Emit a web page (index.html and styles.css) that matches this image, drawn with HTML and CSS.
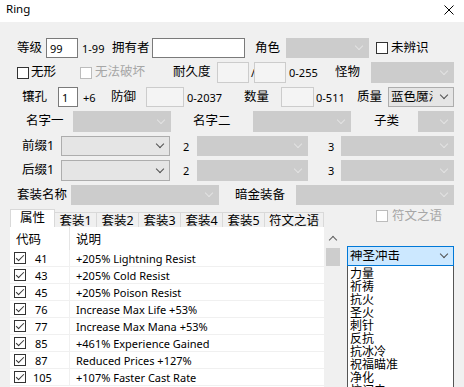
FILE: index.html
```html
<!DOCTYPE html>
<html>
<head>
    <meta charset="utf-8">
    <link rel="stylesheet" href="styles.css">
</head>
<body>
    <div class="titlebar">
        <span class="title">Ring</span>
        <svg class="close" width="10" height="10" viewBox="0 0 10 10"><path d="M0.5 0.5L9.5 9.5M9.5 0.5L0.5 9.5"/></svg>
    </div>

    <div class="form">
        <div class="row r1">
            <span class="zh">等级</span>
            <span class="box w32">99</span>
            <span>1-99</span>
            <span class="zh">拥有者</span>
            <span class="box w93"></span>
            <span class="zh">角色</span>
            <span class="cb w83"></span>
            <span class="chk"></span>
            <span class="zh">未辨识</span>
        </div>
        <div class="row r2">
            <span class="chk"></span>
            <span class="zh">无形</span>
            <span class="chk off"></span>
            <span class="zh gray">无法破坏</span>
            <span class="zh">耐久度</span>
            <span class="box dis w32"></span>
            <span>/</span>
            <span class="box dis w32"></span>
            <span>0-255</span>
            <span class="zh">怪物</span>
            <span class="cb w83"></span>
        </div>
        <div class="row r3">
            <span class="zh">镶孔</span>
            <span class="box w20">1</span>
            <span>+6</span>
            <span class="zh">防御</span>
            <span class="box dis w38"></span>
            <span>0-2037</span>
            <span class="zh">数量</span>
            <span class="box dis w33"></span>
            <span>0-511</span>
            <span class="zh">质量</span>
            <span class="cb en w66"><span class="val">蓝色魔法</span></span>
        </div>
        <div class="row r4">
            <span class="zh">名字一</span>
            <span class="cb w98"></span>
            <span class="zh">名字二</span>
            <span class="cb w98"></span>
            <span class="zh">子类</span>
            <span class="cb w36"></span>
        </div>
        <div class="row r5">
            <span class="zh">前缀1</span>
            <span class="cb en w109"></span>
            <span>2</span>
            <span class="cb w111"></span>
            <span>3</span>
            <span class="cb w113"></span>
        </div>
        <div class="row r5">
            <span class="zh">后缀1</span>
            <span class="cb en w109"></span>
            <span>2</span>
            <span class="cb w111"></span>
            <span>3</span>
            <span class="cb w113"></span>
        </div>
        <div class="row r7">
            <span class="zh">套装名称</span>
            <span class="cb w148"></span>
            <span class="zh">暗金装备</span>
            <span class="cb w158"></span>
        </div>
    </div>

    <div class="lower">
        <div class="tabctl">
            <div class="tabs">
                <span class="tab on">属性</span>
                <span class="tab">套装1</span>
                <span class="tab">套装2</span>
                <span class="tab">套装3</span>
                <span class="tab">套装4</span>
                <span class="tab">套装5</span>
                <span class="tab wide">符文之语</span>
            </div>
            <div class="page">
                <div class="list">
                    <div class="lhead">
                        <span class="h1">代码</span>
                        <span class="h2">说明</span>
                    </div>
                    <div class="lrow"><span class="c1"><span class="chk on"></span><span class="num">41</span></span><span class="desc">+205% Lightning Resist</span></div>
                    <div class="lrow"><span class="c1"><span class="chk on"></span><span class="num">43</span></span><span class="desc">+205% Cold Resist</span></div>
                    <div class="lrow"><span class="c1"><span class="chk on"></span><span class="num">45</span></span><span class="desc">+205% Poison Resist</span></div>
                    <div class="lrow"><span class="c1"><span class="chk on"></span><span class="num">76</span></span><span class="desc">Increase Max Life +53%</span></div>
                    <div class="lrow"><span class="c1"><span class="chk on"></span><span class="num">77</span></span><span class="desc">Increase Max Mana +53%</span></div>
                    <div class="lrow"><span class="c1"><span class="chk on"></span><span class="num">85</span></span><span class="desc">+461% Experience Gained</span></div>
                    <div class="lrow"><span class="c1"><span class="chk on"></span><span class="num">87</span></span><span class="desc">Reduced Prices +127%</span></div>
                    <div class="lrow"><span class="c1"><span class="chk on"></span><span class="num n3">105</span></span><span class="desc">+107% Faster Cast Rate</span></div>
                </div>
                <div class="sb">
                    <span class="up"></span>
                    <span class="thumb"></span>
                </div>
            </div>
        </div>

        <div class="side">
            <div class="rw">
                <span class="chk off"></span>
                <span class="zh gray">符文之语</span>
            </div>
            <div class="cb sel"><span class="val">神圣冲击</span></div>
            <div class="drop">
                <div>力量</div>
                <div>祈祷</div>
                <div>抗火</div>
                <div>圣火</div>
                <div>刺针</div>
                <div>反抗</div>
                <div>抗冰冷</div>
                <div>祝福瞄准</div>
                <div>净化</div>
                <div>抗闪电</div>
            </div>
        </div>
    </div>
</body>
</html>
```

FILE: styles.css
```css
/* window */

body {
    margin: 0;
    width: 464px;
    height: 387px;
    overflow: hidden;
    background: #f0f0f0;
    font-family: "Noto Sans", "Noto Sans CJK SC", sans-serif;
    font-size: 11px;
    color: #000;
}

.titlebar {
    height: 22px;
    box-sizing: border-box;
    padding: 0 10px 0 6px;
    background: #fff;
    display: flex;
    justify-content: space-between;
    align-items: flex-start;
}

.title {
    font-size: 11.5px;
    line-height: 18px;
}

.close {
    margin-top: 5px;
    fill: none;
    stroke: #000;
    stroke-width: 1;
}

/* form rows */

.form {
    display: grid;
    grid-template-rows: 20px 21px 20px 21px 20px 21px 20px;
    row-gap: 4px;
    padding-top: 16px;
}

.row {
    display: grid;
    align-items: center;
    white-space: nowrap;
    line-height: 1;
}

.r1 {
    padding-left: 17px;
    grid-template-columns: 29px 36px 30px 40px 103px 31px 90px 15px auto;
}

.r2 {
    padding-left: 17px;
    grid-template-columns: 14px 49px 15px 78px 44px 34px 3px 35px 46px 36px auto;
}

.r3 {
    padding-left: 22px;
    grid-template-columns: 36px 25px 28px 35px 41px 57px 37px 35px 41px 31px auto;
}

.r4 {
    padding-left: 26px;
    grid-template-columns: 47px 120px 60px 121px 44px auto;
}

.r5 {
    padding-left: 22px;
    grid-template-columns: 39px 122px 14px 131px 13px auto;
}

.r7 {
    padding-left: 17px;
    grid-template-columns: 54px 164px 61px auto;
}

.zh {
    font-size: 12.5px;
}

.gray {
    color: #a6a6a6;
}

/* widths */
.w20 { width: 20px; }
.w32 { width: 32px; }
.w33 { width: 33px; }
.w36 { width: 36px; }
.w38 { width: 38px; }
.w66 { width: 66px; }
.w83 { width: 83px; }
.w93 { width: 93px; }
.w98 { width: 98px; }
.w109 { width: 109px; }
.w111 { width: 111px; }
.w113 { width: 113px; }
.w148 { width: 148px; }
.w158 { width: 158px; }

/* controls */

.box {
    align-self: stretch;
    box-sizing: border-box;
    border: 1px solid #7a7a7a;
    background: #fff;
    padding-left: 3px;
    display: flex;
    align-items: center;
}

.box.dis {
    border-color: #cccccc;
    background: #f4f4f4;
}

.cb {
    align-self: stretch;
    box-sizing: border-box;
    border: 1px solid #cccccc;
    background: #cccccc;
    display: flex;
    align-items: center;
    white-space: nowrap;
}

.cb::after {
    content: "";
    flex: none;
    margin-left: auto;
    margin-right: 6px;
    width: 5px;
    height: 5px;
    border-right: 1px solid #e2e2e2;
    border-bottom: 1px solid #e2e2e2;
    transform: translateY(-2px) rotate(45deg);
}

.cb.en {
    background: #e5e5e5;
    border-color: #adadad;
}

.cb.en::after,
.cb.sel::after {
    border-color: #505050;
}

.cb .val {
    flex: 1;
    overflow: hidden;
    padding-left: 2px;
    margin-right: 8px;
    font-size: 12.5px;
    line-height: 1;
}

.cb.sel {
    height: 20px;
    margin-top: 24px;
    background: #cce8ff;
    border-color: #0078d7;
}

.chk {
    position: relative;
    box-sizing: border-box;
    width: 12px;
    height: 12px;
    border: 1px solid #333;
    background: #fff;
}

.chk.off {
    border-color: #bcbcbc;
}

.chk.on::after {
    content: "";
    position: absolute;
    left: 3px;
    top: 0;
    width: 3px;
    height: 7px;
    border-right: 1px solid #333;
    border-bottom: 1px solid #333;
    transform: rotate(45deg);
}

/* tabs and list */

.lower {
    display: flex;
    margin-top: 4px;
}

.tabctl {
    margin-left: 10px;
    width: 331px;
}

.tabs {
    display: flex;
    align-items: flex-end;
    height: 18px;
}

.tab {
    box-sizing: border-box;
    width: 42px;
    height: 15px;
    padding-top: 3px;
    border-top: 1px solid #d9d9d9;
    border-right: 1px solid #d9d9d9;
    display: flex;
    justify-content: center;
    align-items: center;
    font-size: 12.5px;
    line-height: 1;
}

.tab.on {
    width: 45px;
    height: 18px;
    padding-top: 0;
    background: #fff;
    border-left: 1px solid #d9d9d9;
}

.tab.wide {
    width: 59px;
}

.page {
    display: flex;
    height: 160px;
}

.list {
    width: 314px;
    background: #fff;
}

.lhead {
    display: grid;
    grid-template-columns: 60px auto;
    height: 23px;
    font-size: 12.5px;
}

.lhead span {
    display: flex;
    align-items: center;
    padding-left: 6px;
}

.lhead .h1 {
    border-right: 1px solid #e5e5e5;
}

.lrow {
    display: grid;
    grid-template-columns: 60px auto;
    height: 17px;
    box-sizing: border-box;
    border-bottom: 1px solid #f0f0f0;
}

.lrow .c1 {
    display: flex;
    align-items: center;
    padding-left: 4px;
    border-right: 1px solid #f0f0f0;
}

.num {
    margin-left: 9px;
}

.num.n3 {
    margin-left: 7px;
}

.desc {
    display: flex;
    align-items: center;
    padding-left: 6px;
}

.sb {
    width: 17px;
    display: flex;
    flex-direction: column;
    align-items: center;
}

.sb .up {
    width: 17px;
    height: 21px;
    display: flex;
    justify-content: center;
    align-items: center;
}

.sb .up::before {
    content: "";
    width: 5px;
    height: 5px;
    border-left: 1.5px solid #606060;
    border-top: 1.5px solid #606060;
    transform: translateY(2px) rotate(45deg);
}

.sb .thumb {
    width: 14px;
    height: 18px;
    background: #cdcdcd;
}

/* right column with open dropdown */

.side {
    position: relative;
    margin-left: 6px;
    width: 107px;
}

.rw {
    display: flex;
    align-items: center;
    gap: 4px;
    height: 12px;
    margin: 1px 0 0 29px;
    line-height: 1;
}

.drop {
    position: absolute;
    left: 0;
    top: 57px;
    width: 107px;
    height: 130px;
    box-sizing: border-box;
    border: 1px solid #555;
    border-top: none;
    background: #fff;
    padding: 1px 0 0 2px;
}

.drop div {
    font-size: 12px;
    line-height: 13px;
}
```
